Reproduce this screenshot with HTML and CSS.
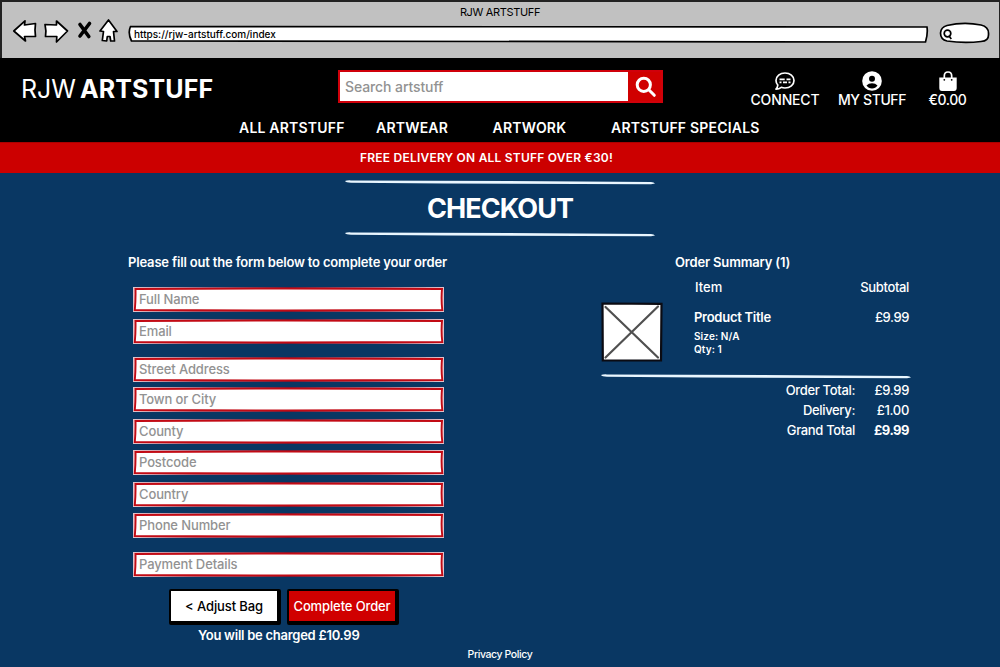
FILE: index.html
```html
<!DOCTYPE html>
<html lang="en">
<head>
<meta charset="utf-8">
<title>RJW ARTSTUFF</title>
<link rel="stylesheet" href="styles.css">
</head>
<body>
<svg class="defs" width="0" height="0">
  <linearGradient id="edge">
    <stop offset="0" stop-color="#e3c3cb"/>
    <stop offset=".2" stop-color="#a76a80"/>
    <stop offset=".5" stop-color="#6b1c38"/>
    <stop offset=".8" stop-color="#a76a80"/>
    <stop offset="1" stop-color="#e3c3cb"/>
  </linearGradient>
  <symbol id="field" viewBox="0 0 311 25" preserveAspectRatio="none">
    <rect width="311" height="25" fill="url(#edge)"/>
    <path d="M2.500 2Q150 1.200 309 2Q308 12 309.300 23Q150 23.800 1.800 23Q2.800 12 2.500 2Z" fill="#fff" stroke="#c20a14" stroke-width="1.900"/>
  </symbol>
  <symbol id="rule" viewBox="0 0 310 5" preserveAspectRatio="none">
    <path d="M0 1Q2 .2 6 .4L200 1.200L306 2.100Q309 2.400 310 3.600L306 4.300L100 3.400L6 2.800Q1 2.500 0 1Z" fill="#e9f6ff"/>
  </symbol>
</svg>
<div class="chrome">
  <div class="chrome-title">RJW ARTSTUFF</div>
  <div class="chrome-bar">
    <svg class="chrome-icons" width="120" height="30" viewBox="0 0 120 30" fill="#fff" stroke="#000" stroke-width="1.700" stroke-linejoin="round" stroke-linecap="round">
      <path d="M13.800 15L25 4.800L24.500 9L35.500 7.500Q34.500 14 35.500 20.500L24.500 20.500L25.500 25Z"/>
      <path d="M45 8.500L56.500 9L56.500 5L67.500 15L56.500 26L56.800 20.500L45.500 20.500Q46.500 15 45 8.500Z"/>
      <path d="M80 8.500L88.800 20.500M89.500 7.500L80 20" stroke-width="3.600"/>
      <path d="M108.500 4L117 15.500L113.500 15.500L114.500 25L110.700 25L110 20.500L107.300 20.500L106.700 25L102.300 24.500L103.500 15.500L100 15Z"/>
    </svg>
    <div class="address">
      <svg width="802" height="18" viewBox="0 0 802 18" fill="#fff" stroke="#000" stroke-width="1.700"><path d="M2.500 1.500Q400 1 799 2Q800 9 797.500 17Q400 17 3.500 16Q-.5 8 2.500 1.500Z"/></svg>
      <span>https://rjw-artstuff.com/index</span>
    </div>
    <svg class="chrome-search" width="52" height="24" viewBox="0 0 52 24" fill="#fff" stroke="#000" stroke-width="1.700"><path d="M8 4.500Q25 .5 42 4Q50 6 49.500 13Q50 20 42 20.500Q25 22.500 8 20Q1.500 18.500 1.500 12Q2 6 8 4.500Z"/><circle cx="8.500" cy="12.500" r="3.300"/><path d="M10 15L12.300 18"/></svg>
  </div>
</div>
<header class="header">
  <div class="header-top">
    <div class="logo"><span class="logo-a">RJW</span><span class="logo-b">ARTSTUFF</span></div>
    <div class="search">
      <span class="search-box">Search artstuff</span>
      <span class="search-btn"><svg width="22" height="22" viewBox="0 0 22 22" fill="none" stroke="#fff" stroke-width="3" stroke-linecap="round"><circle cx="8.800" cy="8.800" r="6.600"/><path d="M13.800 13.800L19.300 19.300"/></svg></span>
    </div>
    <div class="account">
      <div class="acc"><svg width="20" height="20" viewBox="0 0 20 20"><path d="M10 2C15 2 19 5 19 9.500C19 14 15 17 10 17Q8 17 6.300 16.300Q4 18.100 1 18.200Q2.600 16.500 2.800 14Q1 12 1 9.500C1 5 5 2 10 2Z" fill="none" stroke="#fff" stroke-width="1.700" stroke-linejoin="round"/><path d="M4.500 8.300H9.700M11.500 8.300H15.500M4.500 11.300H6.500M8 11.300H12M13.500 11.300H15.500" stroke="#fff" stroke-width="1.700"/></svg><span class="t-connect">CONNECT</span></div>
      <div class="acc"><svg width="20" height="20" viewBox="0 0 20 20"><circle cx="10" cy="10" r="9.800" fill="#fff"/><circle cx="10" cy="7.700" r="3"/><path d="M4.500 14.500Q6.500 12.300 10 12.300T15.500 14.500Q13.500 17.500 10 17.500T4.500 14.500Z"/></svg><span class="t-stuff">MY STUFF</span></div>
      <div class="acc"><svg width="20" height="20" viewBox="0 0 20 20"><path d="M6.300 8V5Q6.300 1 10 1T13.700 5V8" fill="none" stroke="#fff" stroke-width="1.700"/><path d="M1.300 6.500H18.700V17Q18.700 20 16 20H4Q1.300 20 1.300 17Z" fill="#fff"/><circle cx="6.300" cy="8.800" r=".9"/><circle cx="13.700" cy="8.800" r=".9"/></svg><span class="t-bag">€0.00</span></div>
    </div>
  </div>
  <nav class="nav"><span>ALL ARTSTUFF</span><span>ARTWEAR</span><span>ARTWORK</span><span>ARTSTUFF SPECIALS</span></nav>
</header>
<div class="banner"><span>FREE DELIVERY ON ALL STUFF OVER €30!</span></div>
<main>
  <div class="title">
    <svg class="rule" width="310" height="5"><use href="#rule"/></svg>
    <h1>CHECKOUT</h1>
    <svg class="rule" width="310" height="5"><use href="#rule"/></svg>
  </div>
  <div class="columns">
    <section class="form">
      <h2>Please fill out the form below to complete your order</h2>
      <div class="fields">
        <div class="field"><svg><use href="#field"/></svg><span>Full Name</span></div>
        <div class="field"><svg><use href="#field"/></svg><span>Email</span></div>
        <div class="field group"><svg><use href="#field"/></svg><span>Street Address</span></div>
        <div class="field tight"><svg><use href="#field"/></svg><span>Town or City</span></div>
        <div class="field"><svg><use href="#field"/></svg><span>County</span></div>
        <div class="field"><svg><use href="#field"/></svg><span>Postcode</span></div>
        <div class="field"><svg><use href="#field"/></svg><span>Country</span></div>
        <div class="field"><svg><use href="#field"/></svg><span>Phone Number</span></div>
        <div class="field group"><svg><use href="#field"/></svg><span>Payment Details</span></div>
      </div>
      <div class="buttons"><span class="btn adjust">&lt; Adjust Bag</span><span class="btn complete">Complete Order</span></div>
      <p class="charged">You will be charged £10.99</p>
    </section>
    <section class="summary">
      <h2>Order Summary (1)</h2>
      <div class="head"><span class="item">Item</span><span class="subtotal">Subtotal</span></div>
      <div class="product">
        <svg width="62" height="61" viewBox="0 0 62 61"><path d="M1.500 1.500L60.500 1.800L60 58.500L1.800 58.500Z" fill="#fff" stroke="#0b0b12" stroke-width="2.200"/><path d="M4.500 5L57 55.500M57 4.500L4.500 55.500" stroke="#505050" stroke-width="2.200" stroke-linecap="round"/></svg>
        <div class="info"><b class="name">Product Title</b><b class="size">Size: N/A</b><b class="qty">Qty: 1</b></div>
        <span class="price">£9.99</span>
      </div>
      <svg class="rule" width="310" height="5"><use href="#rule"/></svg>
      <div class="totals">
        <span>Order Total:</span><span>£9.99</span>
        <span>Delivery:</span><span>£1.00</span>
        <span>Grand Total</span><b>£9.99</b>
      </div>
    </section>
  </div>
</main>
<footer>Privacy Policy</footer>
</body>
</html>
```
FILE: styles.css
```css
* { box-sizing: border-box; }
body { margin: 0; width: 1000px; height: 667px; overflow: hidden; background: #093763; color: #fff; font: 500 13px/20px Inter, "Liberation Sans", sans-serif; white-space: nowrap; }
h1, h2, p { margin: 0; }
svg { display: block; flex: none; }
.defs { position: absolute; }
.chrome { height: 58px; background: #c1c1c1; border: solid #222; border-width: 2px 1px 0 2px; color: #000; }
.chrome-title { text-align: center; font-size: 11px; line-height: 20px; height: 15px; font-weight: 400; letter-spacing: -.35px; padding-right: 1px; }
.chrome-bar { display: flex; }
.chrome-icons { margin: -1px 0 0 -2px; }
.address { display: grid; margin: 8px 0 0 8px; width: 802px; height: 18px; }
.address > * { grid-area: 1 / 1; }
.address span { padding-left: 6px; font-size: 10px; line-height: 18px; }
.chrome-search { margin: 4px 0 0 9px; }
.header { height: 84px; background: #000; }
.header-top { display: grid; grid-template-columns: 338px 412px 250px; height: 59px; }
.logo { display: flex; padding: 16px 0 0 21px; font-size: 25px; line-height: 30px; }
.logo-a { width: 59px; font-weight: 400; }
.logo-b { font-weight: 700; letter-spacing: .1px; }
.search { display: flex; width: 325px; height: 33px; margin-top: 12px; border: 2px solid #d0000a; background: #d00000; }
.search-box { width: 288px; background: #fff; color: #929292; font-size: 14px; line-height: 29px; padding-left: 5px; letter-spacing: -.1px; }
.search-btn { padding: 4px 0 0 7px; }
.account { display: grid; grid-template-columns: 70px 104px 47px; padding-top: 13px; }
.acc { display: grid; justify-items: center; align-content: start; font-size: 14px; line-height: 17px; letter-spacing: -.15px; }
.t-stuff, .t-bag { letter-spacing: -.4px; }
.nav { display: grid; grid-template-columns: 137px 116.500px 118.500px 150px; padding-left: 239px; font-size: 14px; font-weight: 600; line-height: 22px; letter-spacing: .2px; }
.banner { height: 31px; background: #c00; border-top: 1px solid #a00; text-align: center; font-size: 12px; font-weight: 600; line-height: 29px; padding-right: 27px; letter-spacing: .22px; }
.title { display: grid; justify-items: center; padding-top: 7px; height: 73px; grid-template-rows: 5px 47px 5px; }
h1 { font-size: 27px; font-weight: 700; line-height: 47px; letter-spacing: -.9px; }
.columns { display: grid; grid-template-columns: 601px 399px; height: 400px; }
h2 { font-size: 13px; font-weight: 600; line-height: 20px; letter-spacing: -.17px; }
.form { padding: 6px 0 0 128px; }
.fields { display: grid; width: 311px; margin: 15px 0 0 5px; }
.field { display: grid; height: 25px; margin-bottom: 6.650px; color: #929292; letter-spacing: -.12px; }
.field > * { grid-area: 1 / 1; }
.field svg { width: 311px; height: 25px; }
.field span { padding-left: 6px; line-height: 24px; }
.group { margin-top: 6.650px; }
.field.group:has(+ .tight) { margin-bottom: 5px; }
.buttons { display: flex; gap: 6px; margin: 5.500px 0 0 41px; }
.btn { width: 112px; height: 36px; border: solid #000; border-width: 2px 4px 4px 2px; border-radius: 2px; line-height: 31px; text-align: center; letter-spacing: -.12px; }
.adjust { background: #fff; color: #000; }
.complete { background: #d00000; }
.charged { padding-left: 70px; font-weight: 600; line-height: 21px; letter-spacing: -.26px; }
.summary { padding-top: 6px; width: 310px; }
.summary h2 { padding-left: 74px; }
.head { display: flex; justify-content: space-between; padding: 5px 2px 0 94px; }
.subtotal { letter-spacing: -.35px; }
.product { display: grid; grid-template-columns: 93px 1fr auto; padding: 5px 2px 0 0; height: 77px; }
.info { display: grid; align-content: start; padding-top: 5px; }
.info b { font-weight: 600; }
.name { letter-spacing: -.27px; }
.size, .qty { font-size: 10px; line-height: 13px; letter-spacing: .1px; }
.size { padding-top: 3px; }
.price { padding-top: 5px; letter-spacing: -.4px; }
.totals { display: grid; grid-template-columns: 254px 54px; text-align: right; padding-top: 1px; letter-spacing: -.33px; }
.totals b { letter-spacing: -.5px; }
footer { text-align: center; font-size: 10.500px; line-height: 18px; letter-spacing: -.4px; }
```
